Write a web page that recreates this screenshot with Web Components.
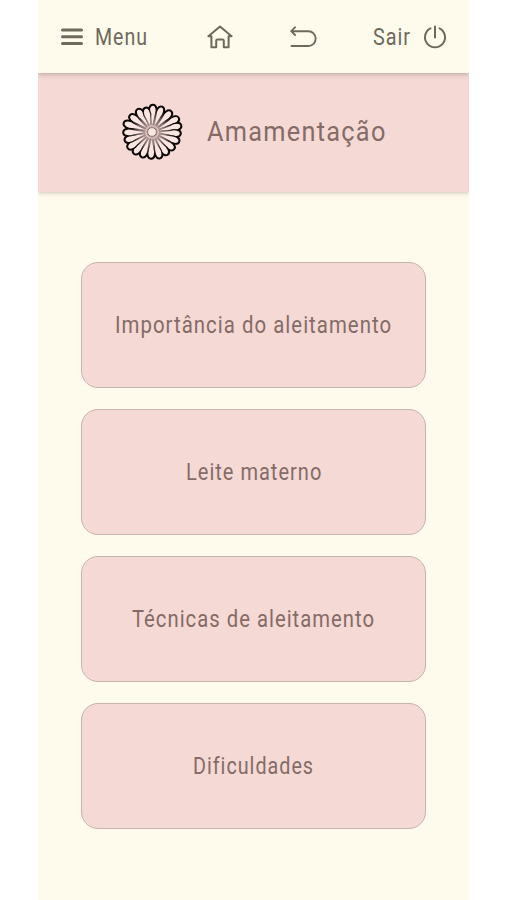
<!DOCTYPE html>
<html lang="pt-BR">
<head>
<meta charset="utf-8">
<meta name="viewport" content="width=device-width, initial-scale=1">
<title>Amamentação</title>
<style>
  :root {
    --bg: #fefaec;
    --pink: #f4d9d5;
    --ink: #6d695b;
    --text: #856b66;
    --border: #c7b4ae;
  }
  body { margin: 0; background: #fff; font-family: Roboto, "Liberation Sans", sans-serif; }
</style>
</head>
<body>
<app-screen>
  <top-bar slot="bar"></top-bar>
  <page-header slot="header"><narrow-text width="180">Amamentação</narrow-text></page-header>
  <topic-button><narrow-text width="277">Importância do aleitamento</narrow-text></topic-button>
  <topic-button><narrow-text width="136">Leite materno</narrow-text></topic-button>
  <topic-button><narrow-text width="243">Técnicas de aleitamento</narrow-text></topic-button>
  <topic-button><narrow-text width="121">Dificuldades</narrow-text></topic-button>
</app-screen>

<script>
class AppScreen extends HTMLElement {
  connectedCallback() {
    if (this.shadowRoot) return;
    this.attachShadow({ mode: 'open' }).innerHTML = `
      <style>
        :host { display:flex; flex-direction:column; box-sizing:border-box; width:431px; height:900px; margin:0 auto; background:var(--bg); overflow:hidden; }
        main { display:grid; grid-auto-rows:126px; gap:21px; padding:70px 43px 0; }
      </style>
      <slot name="bar"></slot>
      <slot name="header"></slot>
      <main><slot></slot></main>
    `;
  }
}

// condensed label: squeezes its text to the given width
class NarrowText extends HTMLElement {
  connectedCallback() {
    if (this.shadowRoot) return;
    const shadow = this.attachShadow({ mode: 'open' });
    shadow.innerHTML = `
      <style>
        :host { display:block; flex:none; white-space:nowrap; text-align:left; line-height:1.2; letter-spacing:.05em; }
        span { display:inline-block; transform-origin:0 50%; margin-right:-100px; }
      </style>
      <span><slot></slot></span>
    `;
    const width = Number(this.getAttribute('width'));
    const span = shadow.querySelector('span');
    this.style.width = `${width}px`;
    requestAnimationFrame(() => {
      span.style.transform = `scaleX(${width / span.offsetWidth})`;
    });
  }
}

class TopBar extends HTMLElement {
  connectedCallback() {
    if (this.shadowRoot) return;
    this.attachShadow({ mode: 'open' }).innerHTML = `
      <style>
        :host { display:block; position:relative; height:73px; background:var(--bg); color:var(--ink); font-size:24px; box-shadow:0 1px 5px rgba(90,70,60,.4); }
        nav { display:flex; align-items:center; justify-content:space-between; box-sizing:border-box; height:73px; padding:1px 22px 0 23px; }
        .item { display:flex; align-items:center; gap:12px; }
        svg { display:block; fill:none; stroke:currentColor; stroke-linecap:round; stroke-linejoin:round; }
        .home { margin-left:3px; }
        .back { margin-left:1px; }
      </style>
      <nav>
        <div class="item">
          <svg width="22" height="20" viewBox="0 0 22 20" stroke-width="3"><path d="M1.5 3h19M1.5 9.8h19M1.5 16.4h19"/></svg>
          <narrow-text width="53">Menu</narrow-text>
        </div>
        <svg class="home" width="26" height="24" viewBox="0 0 26 24" stroke-width="2"><path d="M4.4 11.2H1.4L13 1.5l11.6 9.7h-3v11.1h-4.8V15.8a1.2 1.2 0 0 0-1.2-1.2h-5.2a1.2 1.2 0 0 0-1.2 1.2v6.5H4.4z"/></svg>
        <svg class="back" width="27" height="22" viewBox="0 0 27 22" stroke-width="1.9"><path d="M5 1.3 1.2 5.2 5 9M1.5 5.2h16.8a7.4 7.4 0 0 1 0 14.8H1.5"/></svg>
        <div class="item">
          <narrow-text width="38">Sair</narrow-text>
          <svg width="24" height="24" viewBox="0 0 24 24" stroke-width="2"><path d="M12 1.6v11M7.5 3.4a10 10 0 1 0 9 0"/></svg>
        </div>
      </nav>
    `;
  }
}

// petal tips relative to the centre of the flower
const PETALS = [
  [1, -27], [10, -25], [19, -20.5], [26.5, -14], [29, -6.5], [28.5, 1.5], [27, 9.5],
  [22, 17], [15.5, 22.5], [8, 26], [-1, 26.5], [-10, 25], [-18, 21.5], [-24, 16],
  [-27, 8.5], [-28.5, 0.5], [-28, -9], [-22, -16.5], [-14.5, -22.5], [-6.5, -24],
];

class FlowerLogo extends HTMLElement {
  connectedCallback() {
    if (this.shadowRoot) return;
    const petals = PETALS.map(([x, y]) => {
      const r = Math.hypot(x, y);
      const angle = Math.atan2(y, x) * 180 / Math.PI;
      return `
        <path transform="rotate(${angle.toFixed(1)})" d="M6 -.4L${r - 10} -2.7C${r - 6} -4.3 ${r} -3.6 ${r} 0C${r} 3.6 ${r - 6} 4.3 ${r - 10} 2.7L6 .4z"/>`;
    }).join('');
    this.attachShadow({ mode: 'open' }).innerHTML = `
      <style>
        :host { display:block; flex:none; }
        svg { display:block; overflow:visible; }
      </style>
      <svg width="62" height="58" viewBox="-31 -29 62 58">
        <defs>
          <radialGradient id="line" gradientUnits="userSpaceOnUse" cx="0" cy="0" r="29">
            <stop offset=".2" stop-color="#b89f9a"/>
            <stop offset=".45" stop-color="#857370"/>
            <stop offset=".65" stop-color="#2e2523"/>
            <stop offset=".78" stop-color="#0b0707"/>
          </radialGradient>
        </defs>
        <g fill="none" stroke="#0b0707" stroke-width="2.6" stroke-linejoin="round">${petals}</g>
        <g fill="#f9e6e2" stroke="url(#line)" stroke-width="1.3">${petals}</g>
        <circle r="7" fill="#f4d9d5" opacity=".6"/>
        <circle r="4.4" fill="#f8e4e0" stroke="#8c7773" stroke-width="1"/>
      </svg>
    `;
  }
}

class PageHeader extends HTMLElement {
  connectedCallback() {
    if (this.shadowRoot) return;
    this.attachShadow({ mode: 'open' }).innerHTML = `
      <style>
        :host { display:flex; align-items:center; gap:24px; box-sizing:border-box; height:119px; padding:0 0 1px 83px; background:var(--pink); color:var(--text); font-size:28px; box-shadow:0 1px 4px rgba(90,80,60,.3); }
      </style>
      <flower-logo></flower-logo>
      <slot></slot>
    `;
  }
}

class TopicButton extends HTMLElement {
  connectedCallback() {
    if (this.shadowRoot) return;
    this.attachShadow({ mode: 'open' }).innerHTML = `
      <style>
        :host { display:grid; }
        button { display:flex; align-items:center; justify-content:center; margin:0; padding:0; font:inherit; font-size:24px; color:var(--text); background:var(--pink); border:1px solid var(--border); border-radius:17px; }
      </style>
      <button type="button"><slot></slot></button>
    `;
  }
}

customElements.define('narrow-text', NarrowText);
customElements.define('flower-logo', FlowerLogo);
customElements.define('top-bar', TopBar);
customElements.define('page-header', PageHeader);
customElements.define('topic-button', TopicButton);
customElements.define('app-screen', AppScreen);
</script>
</body>
</html>
